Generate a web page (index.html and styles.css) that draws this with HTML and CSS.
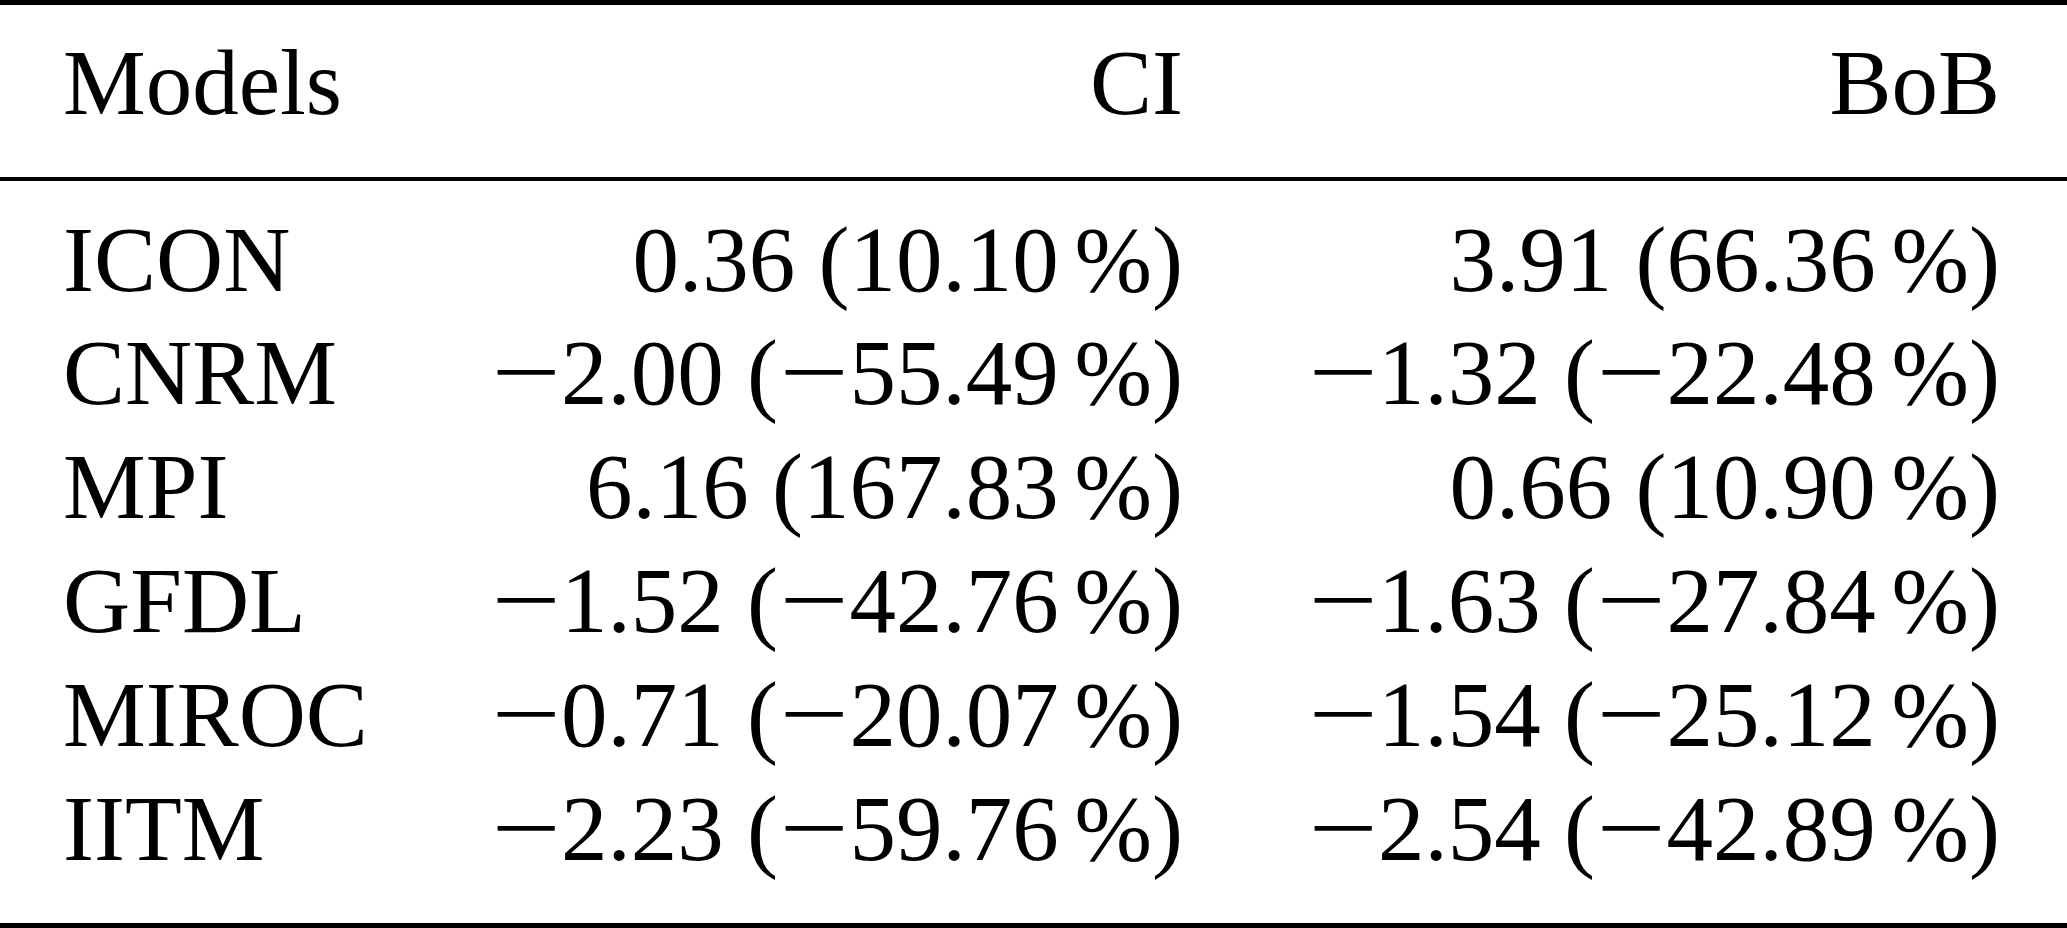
FILE: index.html
```html
<!DOCTYPE html>
<html lang="en">
<head>
<meta charset="utf-8">
<title>Table</title>
<link rel="stylesheet" href="styles.css">
</head>
<body>
<div class="table">
  <div class="head row">
    <div class="c-label">Models</div>
    <div class="c-num">CI</div>
    <div class="c-num">BoB</div>
  </div>
  <div class="body">
    <div class="row">
      <div class="c-label">ICON</div>
      <div class="c-num">0.36 (10.10<span class="ts"></span>%)</div>
      <div class="c-num">3.91 (66.36<span class="ts"></span>%)</div>
    </div>
    <div class="row">
      <div class="c-label">CNRM</div>
      <div class="c-num"><span class="mn">&minus;</span>2.00 (<span class="mn">&minus;</span>55.49<span class="ts"></span>%)</div>
      <div class="c-num"><span class="mn">&minus;</span>1.32 (<span class="mn">&minus;</span>22.48<span class="ts"></span>%)</div>
    </div>
    <div class="row">
      <div class="c-label">MPI</div>
      <div class="c-num">6.16 (167.83<span class="ts"></span>%)</div>
      <div class="c-num">0.66 (10.90<span class="ts"></span>%)</div>
    </div>
    <div class="row">
      <div class="c-label">GFDL</div>
      <div class="c-num"><span class="mn">&minus;</span>1.52 (<span class="mn">&minus;</span>42.76<span class="ts"></span>%)</div>
      <div class="c-num"><span class="mn">&minus;</span>1.63 (<span class="mn">&minus;</span>27.84<span class="ts"></span>%)</div>
    </div>
    <div class="row">
      <div class="c-label">MIROC</div>
      <div class="c-num"><span class="mn">&minus;</span>0.71 (<span class="mn">&minus;</span>20.07<span class="ts"></span>%)</div>
      <div class="c-num"><span class="mn">&minus;</span>1.54 (<span class="mn">&minus;</span>25.12<span class="ts"></span>%)</div>
    </div>
    <div class="row">
      <div class="c-label">IITM</div>
      <div class="c-num"><span class="mn">&minus;</span>2.23 (<span class="mn">&minus;</span>59.76<span class="ts"></span>%)</div>
      <div class="c-num"><span class="mn">&minus;</span>2.54 (<span class="mn">&minus;</span>42.89<span class="ts"></span>%)</div>
    </div>
  </div>
</div>
</body>
</html>
```

FILE: styles.css
```css
html, body {
  margin: 0;
  padding: 0;
  background: #ffffff;
}

body {
  font-family: "Liberation Serif", "Times New Roman", serif;
  font-size: 93px;
  line-height: 113.8px;
  color: #000000;
}

.table {
  width: 2067px;
  border-top: 5px solid #000;
  border-bottom: 5px solid #000;
  box-sizing: border-box;
}

.row {
  display: grid;
  grid-template-columns: 360px 760px 817px;
  padding: 0 67px 0 63px;
  white-space: nowrap;
}

.head {
  padding-top: 20.7px;
  padding-bottom: 38px;
  border-bottom: 4px solid #000;
}

.body {
  padding-top: 21.2px;
  padding-bottom: 37.5px;
}

.c-label {
  text-align: left;
}

.c-num {
  text-align: right;
}

.ts {
  display: inline-block;
  width: 0.17em;
}

.mn {
  display: inline-block;
  line-height: 40px;
  margin: 0 9px 0 10px;
  transform: scale(1.32, 1.06);
  transform-origin: 50% 72%;
}
```
